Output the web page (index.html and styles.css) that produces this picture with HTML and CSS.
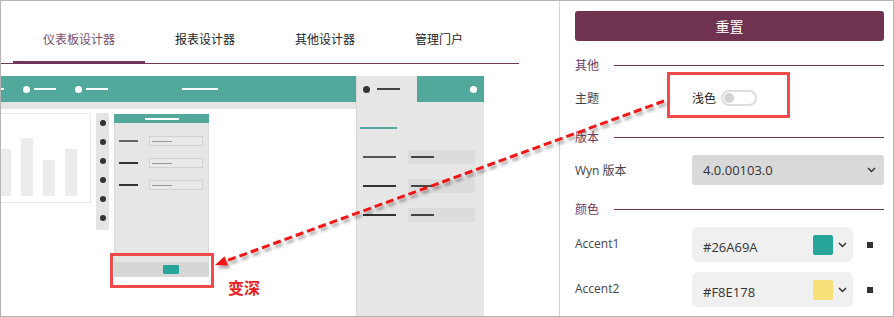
FILE: index.html
```html
<!DOCTYPE html>
<html>
<head>
	<meta charset="UTF-8">
	<title>主题设置</title>
	<link rel="stylesheet" href="styles.css">
</head>
<body>
	<div class="frame">
		<div class="designer">
			<ul class="tabs">
				<li class="tab active">仪表板设计器</li>
				<li class="tab">报表设计器</li>
				<li class="tab">其他设计器</li>
				<li class="tab">管理门户</li>
			</ul>
			<div class="preview">
				<div class="canvas">
					<div class="canvas-bar">
						<span class="bar-dash"></span>
						<span class="bar-dot"></span><span class="bar-line"></span>
						<span class="bar-dot"></span><span class="bar-line"></span>
						<span class="bar-title"></span>
					</div>
					<div class="canvas-strip"></div>
					<div class="canvas-body">
						<div class="chart">
							<i style="height:47px"></i>
							<i style="height:58px"></i>
							<i style="height:36px"></i>
							<i style="height:47px"></i>
						</div>
						<div class="dots">
							<span></span><span></span><span></span>
							<span></span><span></span><span></span>
						</div>
						<div class="form">
							<div class="form-head"><span></span></div>
							<div class="form-main">
								<div class="form-row"><b></b><span></span></div>
								<div class="form-row"><b></b><span></span></div>
								<div class="form-row"><b></b><span></span></div>
							</div>
							<div class="form-foot"><span></span></div>
						</div>
					</div>
				</div>
				<div class="side">
					<div class="side-top">
						<div class="side-tab"><i></i><b></b></div>
						<div class="side-bar"><i></i></div>
					</div>
					<div class="side-line"></div>
					<div class="side-rows">
						<div class="side-row"><b></b><span></span></div>
						<div class="side-row"><b></b><span></span></div>
						<div class="side-row"><b></b><span></span></div>
					</div>
				</div>
			</div>
		</div>

		<div class="settings">
			<button class="reset">重置</button>

			<div class="section">其他</div>
			<div class="row theme-row">
				<div class="row-label">主题</div>
				<div class="theme-value">浅色 <span class="toggle"></span></div>
			</div>

			<div class="section">版本</div>
			<div class="row">
				<div class="row-label">Wyn 版本</div>
				<div class="select">
					<span>4.0.00103.0</span>
					<svg class="chevron" width="9" height="6" viewBox="0 0 9 6"><polyline points="1,1 4.5,4.5 8,1" fill="none" stroke="#333" stroke-width="1.5"/></svg>
				</div>
			</div>

			<div class="section">颜色</div>
			<div class="row color-row">
				<div class="row-label accent">Accent1</div>
				<div class="color-box">
					<span class="hex">#26A69A</span>
					<span class="swatch teal"></span>
					<svg class="chevron" width="9" height="6" viewBox="0 0 9 6"><polyline points="1,1 4.5,4.5 8,1" fill="none" stroke="#333" stroke-width="1.5"/></svg>
				</div>
				<span class="mini-square"></span>
			</div>
			<div class="row color-row">
				<div class="row-label accent">Accent2</div>
				<div class="color-box">
					<span class="hex">#F8E178</span>
					<span class="swatch yellow"></span>
					<svg class="chevron" width="9" height="6" viewBox="0 0 9 6"><polyline points="1,1 4.5,4.5 8,1" fill="none" stroke="#333" stroke-width="1.5"/></svg>
				</div>
				<span class="mini-square"></span>
			</div>
		</div>

		<!-- 标注 -->
		<div class="mark mark-foot"></div>
		<div class="mark mark-toggle"></div>
		<div class="note">变深</div>
		<svg class="arrow" width="894" height="317" viewBox="0 0 894 317">
			<defs>
				<filter id="shadow" filterUnits="userSpaceOnUse" x="0" y="0" width="894" height="317">
					<feDropShadow dx="2" dy="3" stdDeviation="1.5" flood-color="#000" flood-opacity="0.35"/>
				</filter>
			</defs>
			<g filter="url(#shadow)">
				<line x1="664" y1="101" x2="226" y2="261" stroke="#f01414" stroke-width="3" stroke-dasharray="8 4"/>
				<polygon points="215,265 228,265.6 224.6,256.2" fill="#f01414"/>
			</g>
		</svg>
	</div>
</body>
</html>
```

FILE: styles.css
```css
html, body {
	margin: 0;
	padding: 0;
	background: #fff;
}
.frame {
	position: relative;
	width: 894px;
	height: 317px;
	box-sizing: border-box;
	border: 1px solid #b5b5b5;
	display: flex;
	overflow: hidden;
	font-family: "Open Sans", "Noto Sans CJK SC", sans-serif;
}

/* 左侧：设计器预览 */
.designer {
	width: 559px;
	flex-shrink: 0;
	box-sizing: border-box;
	border-right: 1px solid #d4d4d4;
	display: flex;
	flex-direction: column;
}
.tabs {
	margin: 0;
	padding: 0 0 0 12px;
	list-style: none;
	display: flex;
	width: 518px;
	box-sizing: border-box;
	border-bottom: 1px solid #70385a;
}
.tab {
	padding: 30px 30px 12px;
	font-size: 12px;
	line-height: 18px;
	color: #222;
	border-bottom: 3px solid transparent;
	margin-bottom: -1px;
}
.tab.active {
	color: #7a4a6e;
	border-bottom-color: #70355a;
}
.preview {
	margin-top: 12px;
	flex: 1;
	display: flex;
	min-height: 0;
}
.canvas {
	width: 355px;
	display: flex;
	flex-direction: column;
	overflow: hidden;
}
.canvas-bar {
	height: 26px;
	flex-shrink: 0;
	background: #52a89a;
	display: flex;
	align-items: center;
}
.bar-dash {
	width: 3px;
	height: 2px;
	background: #fff;
}
.bar-dot {
	width: 7px;
	height: 7px;
	border-radius: 50%;
	background: #fff;
	margin-left: 19px;
}
.bar-line {
	width: 22px;
	height: 2px;
	background: #fff;
	margin-left: 4px;
}
.bar-title {
	width: 36px;
	height: 2px;
	background: #fff;
	margin-left: 74px;
}
.canvas-strip {
	height: 7px;
	flex-shrink: 0;
	background: #e4e4e4;
}
.canvas-body {
	flex: 1;
	display: flex;
	align-items: flex-start;
	padding-top: 4px;
}
.chart {
	width: 90px;
	height: 90px;
	flex-shrink: 0;
	box-sizing: border-box;
	border: 1px solid #e8e8e8;
	border-left: 0;
	display: flex;
	align-items: flex-end;
	gap: 10px;
	padding-bottom: 6px;
	overflow: hidden;
}
.chart i {
	width: 12px;
	flex-shrink: 0;
	background: #ececec;
}
.chart i:first-child {
	margin-left: -2px;
}
.dots {
	margin-left: 5px;
	width: 13px;
	height: 117px;
	box-sizing: border-box;
	background: #e4e4e4;
	border-radius: 2px;
	display: flex;
	flex-direction: column;
	align-items: center;
	gap: 13px;
	padding-top: 7px;
}
.dots span {
	width: 6px;
	height: 6px;
	border-radius: 50%;
	background: #333;
}
.form {
	margin: 1px 0 0 5px;
	width: 95px;
	height: 163px;
	display: flex;
	flex-direction: column;
}
.form-head {
	height: 9px;
	background: #52a89a;
	display: flex;
	justify-content: center;
	align-items: center;
}
.form-head span {
	width: 34px;
	height: 2px;
	background: #fff;
}
.form-main {
	flex: 1;
	background: #e6e6e6;
	border: solid #dadada;
	border-width: 0 1px;
	padding-top: 13px;
	display: flex;
	flex-direction: column;
	gap: 12px;
}
.form-row {
	display: flex;
	align-items: center;
	height: 10px;
}
.form-row b {
	width: 19px;
	height: 2px;
	background: #333;
	margin-left: 4px;
}
.form-row:first-child b {
	background: #666;
}
.form-row span {
	margin-left: 11px;
	width: 54px;
	height: 10px;
	box-sizing: border-box;
	border: 1px solid #d2d2d2;
	background: #e9e9e9;
	display: flex;
	align-items: center;
}
.form-row span::before {
	content: "";
	width: 20px;
	height: 1px;
	margin-left: 2px;
	background: #999;
}
.form-foot {
	height: 15px;
	background: #d6d6d6;
	display: flex;
	align-items: center;
}
.form-foot span {
	margin-left: 49px;
	width: 16px;
	height: 9px;
	border-radius: 1px;
	background: #26a69a;
}
.side {
	width: 128px;
	box-sizing: border-box;
	background: #e6e6e6;
	border-left: 1px solid #d8d8d8;
}
.side-top {
	height: 26px;
	display: flex;
}
.side-tab {
	width: 60px;
	display: flex;
	align-items: center;
}
.side-tab i {
	width: 7px;
	height: 7px;
	border-radius: 50%;
	background: #333;
	margin-left: 6px;
}
.side-tab b {
	width: 23px;
	height: 2px;
	background: #444;
	margin-left: 7px;
}
.side-bar {
	flex: 1;
	background: #52a89a;
	display: flex;
	align-items: center;
	justify-content: flex-end;
	padding-right: 7px;
}
.side-bar i {
	width: 7px;
	height: 7px;
	border-radius: 50%;
	background: #fff;
}
.side-line {
	margin: 25px 0 0 3px;
	width: 37px;
	height: 2px;
	background: #52a89a;
}
.side-rows {
	margin-top: 21px;
	display: flex;
	flex-direction: column;
	gap: 15px;
}
.side-row {
	display: flex;
	align-items: center;
	height: 14px;
}
.side-row b {
	margin-left: 6px;
	width: 33px;
	height: 2px;
	background: #333;
}
.side-row:first-child b {
	background: #555;
}
.side-row span {
	margin-left: 12px;
	width: 67px;
	height: 14px;
	background: #dcdcdc;
	display: flex;
	align-items: center;
}
.side-row span::before {
	content: "";
	margin-left: 3px;
	width: 23px;
	height: 2px;
	background: #444;
}

/* 右侧：设置面板 */
.settings {
	flex: 1;
	padding: 10px 9px 0 15px;
	font-size: 12px;
	color: #444;
}
.reset {
	display: block;
	width: 100%;
	height: 30px;
	border: 0;
	border-radius: 3px;
	background: #6f3350;
	color: #fff;
	font: 14px "Open Sans", "Noto Sans CJK SC", sans-serif;
}
.section {
	display: flex;
	align-items: center;
	height: 20px;
	margin-top: 14px;
	color: #70385a;
}
.section::after {
	content: "";
	flex: 1;
	height: 1px;
	margin-left: 15px;
	background: #70355a;
}
.row {
	display: flex;
	align-items: center;
	margin-top: 8px;
}
.row-label {
	width: 117px;
	flex-shrink: 0;
}
.theme-row {
	height: 30px;
}
.theme-value {
	display: flex;
	align-items: center;
	gap: 5px;
	color: #222;
}
.toggle {
	width: 36px;
	height: 16px;
	box-sizing: border-box;
	border: 2px solid #ddd;
	border-radius: 8px;
	display: flex;
	align-items: center;
	padding-left: 1px;
}
.toggle::before {
	content: "";
	width: 10px;
	height: 10px;
	border-radius: 50%;
	background: #d4d4d4;
}
.select {
	flex: 1;
	height: 30px;
	box-sizing: border-box;
	background: #d9d9d9;
	border-radius: 3px;
	display: flex;
	align-items: center;
	justify-content: space-between;
	padding: 0 8px 0 11px;
	font-size: 13px;
	color: #333;
}
.color-row + .color-row {
	margin-top: 10px;
}
.accent {
	padding-bottom: 3px;
}
.color-box {
	width: 161px;
	height: 35px;
	box-sizing: border-box;
	background: #f0f0f0;
	border-radius: 6px;
	display: flex;
	align-items: center;
	padding: 0 6px 0 11px;
	font-size: 13px;
	color: #333;
}
.hex {
	padding-top: 4px;
}
.swatch {
	margin-left: auto;
	width: 20px;
	height: 20px;
	border-radius: 2px;
}
.swatch.teal {
	background: #26a69a;
}
.swatch.yellow {
	background: #f8e178;
}
.color-box .chevron {
	margin-left: 5px;
}
.mini-square {
	width: 6px;
	height: 6px;
	margin-left: 14px;
	background: #333;
}

/* 标注 */
.mark {
	position: absolute;
	box-sizing: border-box;
	border: 3px solid #f24a4a;
}
.mark-foot {
	left: 109px;
	top: 252px;
	width: 104px;
	height: 35px;
}
.mark-toggle {
	left: 666px;
	top: 71px;
	width: 123px;
	height: 46px;
}
.note {
	position: absolute;
	left: 227px;
	top: 276px;
	font: bold 16px/20px "Noto Sans CJK SC", sans-serif;
	color: #e81c1c;
}
.arrow {
	position: absolute;
	left: -1px;
	top: -1px;
	pointer-events: none;
}
```
